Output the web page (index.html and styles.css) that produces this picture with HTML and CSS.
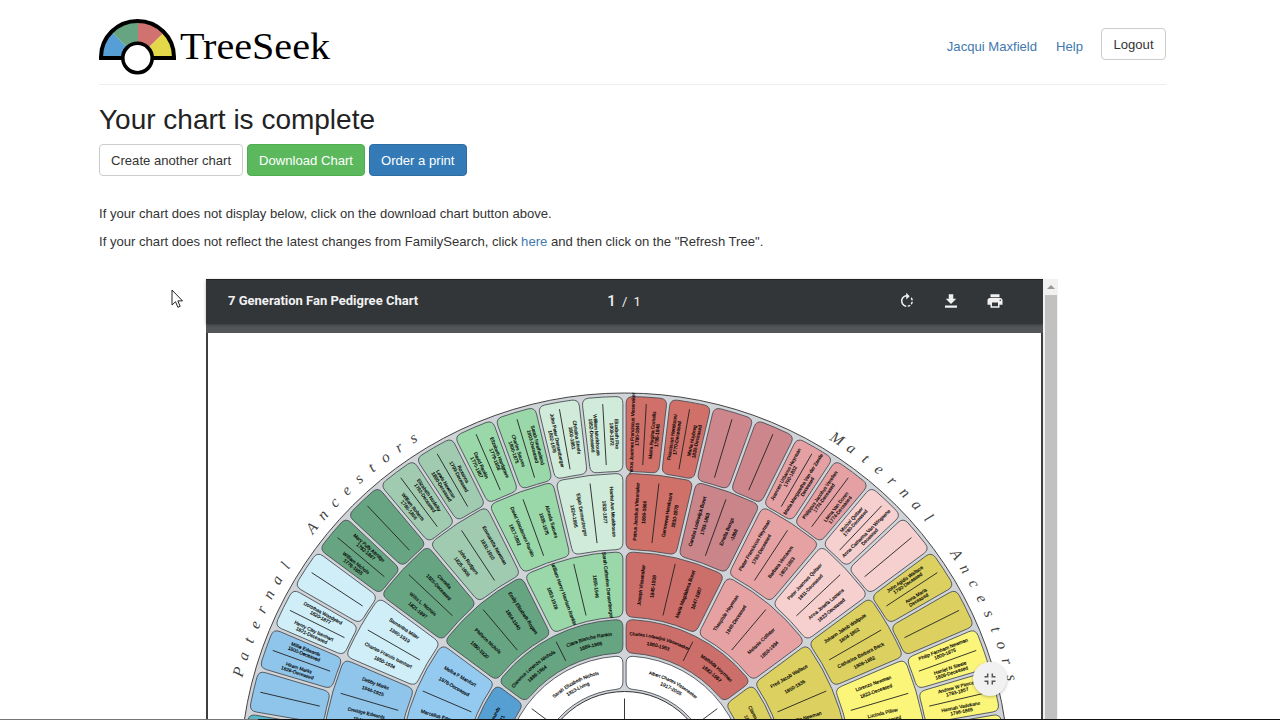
FILE: index.html
```html
<!DOCTYPE html>
<html lang="en">
<head>
    <meta charset="UTF-8">
    <meta name="viewport" content="width=device-width, initial-scale=1.0">
    <title>TreeSeek</title>
    <link rel="stylesheet" href="styles.css">
</head>
<body>
    <div class="container">
        <header class="header">
            <svg class="logo" width="240" height="60" viewBox="0 0 240 60">
                <path d="M3 39 A36 36 0 0 1 13 13.500 L39 39Z" fill="#559fd6"/>
                <path d="M13 13.500 A36 36 0 0 1 39 3 V39Z" fill="#67a481"/>
                <path d="M39 3 A36 36 0 0 1 65 13.500 L39 39Z" fill="#cf7270"/>
                <path d="M65 13.500 A36 36 0 0 1 75 39 H39Z" fill="#e3d84a"/>
                <path d="M2 39 V38 A36.500 36 0 0 1 75 38 V39Z" fill="none" stroke="#000" stroke-width="4"/>
                <circle cx="38.500" cy="39" r="14.700" fill="#fff" stroke="#000" stroke-width="3.600"/>
                <text class="logo-text" x="81" y="39.500" textLength="150" lengthAdjust="spacingAndGlyphs">TreeSeek</text>
            </svg>
            <nav class="nav">
                <a href="#">Jacqui Maxfield</a>
                <a href="#">Help</a>
                <button class="btn logout">Logout</button>
            </nav>
        </header>

        <h2>Your chart is complete</h2>
        <div class="buttons">
            <button class="btn create">Create another chart</button>
            <button class="btn btn-success">Download Chart</button>
            <button class="btn btn-primary">Order a print</button>
        </div>
        <p class="first">If your chart does not display below, click on the download chart button above.</p>
        <p>If your chart does not reflect the latest changes from FamilySearch, click <a href="#">here</a> and then click on the "Refresh Tree".</p>

        <div class="viewer">
            <div class="pdf">
                <div class="toolbar">
                    <span class="title">7 Generation Fan Pedigree Chart</span>
                    <span class="pages"><b>1</b> / 1</span>
                    <span class="tools">
                        <svg width="18" height="18" viewBox="0 0 24 24" fill="#f1f1f1"><path d="M15.550 5.550L11 1v3.070C7.060 4.560 4 7.920 4 12s3.050 7.440 7 7.930v-2.020c-2.840-.480-5-2.940-5-5.910s2.160-5.430 5-5.910V10l4.550-4.450zM19.930 11c-.170-1.390-.720-2.730-1.620-3.890l-1.420 1.420c.540.750.880 1.600 1.020 2.470h2.020zM13 17.900v2.020c1.390-.170 2.740-.710 3.900-1.610l-1.440-1.440c-.750.540-1.590.890-2.460 1.030zm3.890-2.420l1.420 1.410c.900-1.160 1.450-2.500 1.620-3.890h-2.020c-.140.870-.480 1.720-1.020 2.480z"/></svg>
                        <svg width="18" height="18" viewBox="0 0 24 24" fill="#f1f1f1"><path d="M19 9h-4V3H9v6H5l7 7 7-7zM4 18v3h16v-3z"/></svg>
                        <svg width="18" height="18" viewBox="0 0 24 24" fill="#f1f1f1"><path d="M19 8H5c-1.660 0-3 1.340-3 3v6h4v4h12v-4h4v-6c0-1.660-1.340-3-3-3zm-3 11H8v-5h8v5zm3-7c-.550 0-1-.450-1-1s.450-1 1-1 1 .450 1 1-.450 1-1 1zm-1-9H6v4h12V3z"/></svg>
                    </span>
                </div>
                <div class="page">
                    <svg id="fan" width="833" height="387" viewBox="208 333 833 387"></svg>
                </div>
            </div>
            <div class="scrollbar">
                <div class="up"></div>
                <div class="thumb"></div>
            </div>
        </div>
    </div>

    <div class="fit">
        <svg width="14" height="14" viewBox="0 0 14 14" fill="none" stroke="#555" stroke-width="1.500"><path d="M1.500 4.700h3.200V1.500M9.300 1.500v3.200h3.200M12.500 9.300H9.300v3.200M4.700 12.500V9.300H1.500"/></svg>
    </div>
    <svg class="cursor" width="13" height="20" viewBox="0 0 13 20"><path d="M1 1v15l3.500-3.300 2.400 5.600 2.300-1-2.400-5.400h4.700z" fill="#fff" stroke="#222"/></svg>
    <div class="bottom-line"></div>

    <script src="fan.js"></script>
</body>
</html>
```

FILE: styles.css
```css
body {
    margin: 0;
    height: 720px;
    overflow: hidden;
    position: relative;
    background-color: #fff;
    color: #333;
    font-family: "Liberation Sans", Arial, sans-serif;
    font-size: 13.1px;
    line-height: 18px;
}
.container {
    width: 1067px;
    margin-left: 99px;
}
.header {
    display: flex;
    justify-content: space-between;
    height: 84px;
    border-bottom: 1px solid #eee;
}
.logo {
    margin-top: 19px;
}
.logo-text {
    font-family: "Liberation Serif", serif;
    font-size: 37px;
    fill: #000;
}
.nav {
    display: flex;
    align-items: flex-start;
    padding-top: 28px;
}
.nav a {
    margin: 10px 0 0 19px;
}
.nav .logout {
    width: 65px;
    margin-left: 18px;
}
a {
    color: #4278ae;
    text-decoration: none;
}
h2 {
    margin: 18px 0 7px;
    font-size: 28px;
    font-weight: normal;
    line-height: 34px;
    color: #222;
}
.btn {
    height: 32px;
    padding: 0 11px;
    border: 1px solid #ccc;
    border-radius: 4px;
    background-color: #fff;
    color: #333;
    font-family: inherit;
    font-size: 13.1px;
    white-space: nowrap;
}
.buttons {
    display: flex;
    gap: 4px;
}
.btn-success {
    background-color: #5cb85c;
    border-color: #4cae4c;
    color: #fff;
}
.btn-primary {
    background-color: #337ab7;
    border-color: #2e6da4;
    color: #fff;
}
p {
    margin: 0 0 10px;
}
.first {
    margin-top: 29px;
}
.viewer {
    display: flex;
    width: 852px;
    height: 441px;
    margin: 28px 0 0 107px;
}
.pdf {
    width: 837px;
    background-color: #525659;
}
.toolbar {
    display: grid;
    grid-template-columns: 1fr auto 1fr;
    align-items: center;
    box-sizing: border-box;
    height: 45px;
    padding: 0 39px 2px 22px;
    border-top: 1px solid #222;
    background-color: #323639;
    box-shadow: 0 1px 3px rgba(0,0,0,.3);
    color: #f1f1f1;
    font-family: Roboto, sans-serif;
    font-size: 13px;
}
.title {
    font-weight: bold;
}
.pages {
    padding-left: 16px;
    word-spacing: 3px;
}
.pages b {
    font-size: 15px;
    font-weight: 500;
}
.tools {
    display: flex;
    justify-content: flex-end;
    gap: 26px;
}
.page {
    width: 833px;
    height: 387px;
    margin-top: 9px;
    border-left: 2px solid #3c3e42;
    border-right: 2px solid #3c3e42;
    background-color: #fff;
}
.page svg {
    display: block;
}
.scrollbar {
    width: 15px;
    padding: 0 1px;
    background-color: #f1f1f1;
}
.up {
    width: 0;
    margin: 6px auto 0;
    border: 4px solid transparent;
    border-top: 0;
    border-bottom: 4px solid #999;
}
.thumb {
    width: 12px;
    height: 426px;
    margin: 6px auto 0;
    background-color: #c1c1c1;
}
.fit {
    position: absolute;
    left: 973px;
    top: 662px;
    display: flex;
    align-items: center;
    justify-content: center;
    width: 34px;
    height: 34px;
    border-radius: 50%;
    background-color: #f1f1f1;
    box-shadow: 0 1px 3px rgba(0,0,0,.25);
}
.cursor {
    position: absolute;
    left: 171px;
    top: 289px;
}
.bottom-line {
    position: absolute;
    left: 0;
    right: 0;
    bottom: 0;
    height: 1px;
    background: linear-gradient(to right, #777 258px, #111 258px);
}

/* fan chart */
.disc {
    fill: #d0d3d8;
    stroke: #444;
    stroke-width: 1;
}
.center {
    fill: #fff;
    stroke: #333;
}
.cell {
    stroke: #4a4f55;
    stroke-width: .9;
}
.divider {
    stroke: #222;
    stroke-width: .9;
}
.person {
    font-size: 4.8px;
    fill: #000;
    stroke: #000;
    stroke-width: .15;
    text-anchor: middle;
    text-rendering: geometricPrecision;
}
.person.small {
    font-size: 4.4px;
}
.letter {
    font-family: "Liberation Serif", serif;
    font-style: italic;
    font-size: 15.5px;
    fill: #444;
    text-anchor: middle;
    text-rendering: geometricPrecision;
}
```

FILE: fan.js
```js
const CX = 624.5;
const CY = 777.5;
const STEP = 6.68; // degrees covered by one cell of the outer ring

// inner radius, outer radius, outer cells per cell, distance between name and dates
const rings = [
    { r0: 306, r1: 381, span: 1, gap: 5, inset: 7 },
    { r0: 228, r1: 304, span: 2, gap: 8, inset: 8 },
    { r0: 160.5, r1: 225.5, span: 4, gap: 12, inset: 6 },
    { r0: 124.5, r1: 158, span: 8, gap: 8, inset: 6, arc: true },
    { r0: 88.5, r1: 121.5, span: 16, gap: 7, inset: 6, arc: true }
];

// cells run from the middle outwards: color, then the couple as name, dates
const paternal = [
    [
        ['#d0ebd9', 'Elizabeth Fixe', '1809-1872', 'William Monkhouse', '1852-Deceased'],
        ['#d0ebd9', 'Christina Steele', '1800-1881', 'John Peter Densenberger', '1802-1878'],
        ['#9ad8a9', 'Sarah Neatherland', '1803-Deceased', 'Charles Sauves', '1800-1875'],
        ['#9ad8a9', 'Elizabeth Hardgrave', '1779-1856', 'David Rankin', '1770-1857'],
        ['#a0cbb0', 'Roxanna', '1799-Deceased', 'Lewis Newman', '1800-Deceased'],
        ['#a0cbb0', 'Elizabeth Nudelky', '1792-Deceased', 'William Roberts', '1785-1856'],
        ['#67a481'],
        ['#67a481', 'Mary Polly Attridge', '1782-1867', 'William Nichols', '1776-1855'],
        ['#cfeef7'],
        ['#cfeef7', 'Dorothea Woodyard', '1820-1877', 'Henry Clay Isenhart', '1821-Deceased'],
        ['#8fc5ea', 'Millie Edwards', '1800-Deceased', 'Hiram Marks', '1828-Deceased'],
        ['#8fc5ea'],
        ['#58b7c4']
    ],
    [
        ['#d0ebd9', 'Harriet Ann Monkhouse', '1832-1877', 'Elijah Densenberger', '1824-1895'],
        ['#9ad8a9', 'Almeda Sauves', '1835-1875', 'David Woodsmen Rankin', '1817-1892'],
        ['#a0cbb0', 'Emmaretta Newman', '1831-1910', 'John Rodgers', '1825-1906'],
        ['#67a481', 'Cornelia', '1825-Deceased', 'Willis L. Nichols', '1821-1897'],
        ['#cfeef7', 'Samantha Miller', '1860-1919', 'Charles Francis Isenhart', '1850-1934'],
        ['#8fc5ea', 'Debby Marks', '1846-1925', 'Orwidge Edwards', '1841-1920'],
        ['#8fc5ea']
    ],
    [
        ['#9ad8a9', 'Sarah Catherine Densenberger', '1859-1946', 'William Henry Harrison Rankin', '1853-1928'],
        ['#67a481', 'Emily Elizabeth Rogers', '1854-1940', 'Philleon Nichols', '1850-1920'],
        ['#94c9f0', 'Melba F Manifort', '1878-Deceased', 'Marcellus Edmunds', '1872-1940'],
        ['#8fc5ea']
    ],
    [
        ['#67a481', 'Clara Blanche Rankin', '1889-1965', 'Clarence Lorenzo Nichols', '1886-1964'],
        ['#559fd3', 'Mabel Edmunds', '1898-1971', '', '']
    ],
    [
        ['#fff', 'Sarah Elizabeth Nichols', '1923-Living', '', '']
    ]
];

const maternal = [
    [
        ['#d07068', 'Petrus Joannes Franciscus Vissenaker', '1780-1840', 'Maria Regina Cornelis', '1785-1848'],
        ['#d07068', 'Franciscus Hereksoni', '1770-Deceased', 'Maria Huybreg', '1830-Deceased'],
        ['#cd878c'],
        ['#cd878c'],
        ['#e4a0a2', 'Joannes Urbanus Heyrman', '1790-1832', 'Maria Margaretha Van der Zande', 'Deceased'],
        ['#e4a0a2', 'Philippus Jacobus Verellen', '1774-Deceased', 'Livina Van Doren', '1774-Deceased'],
        ['#f6cfcf', 'Michiel Quitaer', '1780-Deceased', 'Anna Catharina Van Wingaene', 'Deceased'],
        ['#f6cfcf'],
        ['#dbd060', 'John Agidis Wallace', '1790-Deceased', 'Anna Maria', 'Deceased'],
        ['#dbd060'],
        ['#fbf57a', 'Philip Farnham Newman', '1809-1875', 'Harriet N Steele', '1806-Deceased'],
        ['#fbf57a', 'Andrew W Pierce', '1783-1857', 'Hannah Vadekane', '1796-1865'],
        ['#fbf57a']
    ],
    [
        ['#cf7069', 'Petrus Jacobus Vissenaker', '1809-1866', 'Genoveva Hereksoni', '1810-1878'],
        ['#c9858a', 'Carolus Lodewijck Boret', '1793-1863', 'Emelia Boogs', '-1868'],
        ['#e6a2a3', 'Pieter Franciscus Heyrman', '1793-Deceased', 'Barbara Vercamm', '1802-1863'],
        ['#f6cfcf', 'Peter Joannes Quitaer', '1811-Deceased', 'Anna Josefa Lootens', '1823-Deceased'],
        ['#dbd060', 'Johann Jakob Wallpole', '1804-1862', 'Catharina Barbara Beck', '1808-1862'],
        ['#fbf57a', 'Lorenzo Newman', '1822-Deceased', 'Lucinda Pillow', '1824-Deceased'],
        ['#fbf57a']
    ],
    [
        ['#cc6e69', 'Joseph Vissenaker', '1845-1928', 'Maria Magdalena Boret', '1847-1907'],
        ['#e6a2a3', 'Theophile Heyrman', '1848-Deceased', 'Melanie Collister', '1850-1934'],
        ['#dbd060', 'Fred Jacob Wallace', '1850-1936', 'Ella Newman', '1857-1930'],
        ['#fbf57a']
    ],
    [
        ['#cc6e69', 'Charles Lodewijck Vissenaeker', '1880-1963', 'Mathilda Heyrman', '1882-1957'],
        ['#dbd060', 'Clarence Wallace', '1882-1950', '', '']
    ],
    [
        ['#fff', 'Albert Charles Vissenaeker', '1917-2005', '', '']
    ]
];

const fan = document.getElementById('fan');
let arcCount = 0;

function el(name, attrs, parent = fan) {
    const node = document.createElementNS('http://www.w3.org/2000/svg', name);
    for (const key in attrs) node.setAttribute(key, attrs[key]);
    parent.appendChild(node);
    return node;
}

// angle is in degrees, clockwise from the top
function point(r, angle) {
    const a = angle * Math.PI / 180;
    return (CX + r * Math.sin(a)).toFixed(2) + ' ' + (CY - r * Math.cos(a)).toFixed(2);
}

function cellPath(r0, r1, a0, a1) {
    const deg = (px, r) => px / r * 180 / Math.PI;
    const c = 7;
    const i0 = a0 + deg(1.6, r0), i1 = a1 - deg(1.6, r0);
    const o0 = a0 + deg(1.6, r1), o1 = a1 - deg(1.6, r1);
    const m0 = a0 + deg(1.6, r1 - c), m1 = a1 - deg(1.6, r1 - c);
    const n0 = a0 + deg(1.6, r0 + c), n1 = a1 - deg(1.6, r0 + c);
    return `M${point(r1 - c, m0)} Q${point(r1, o0)} ${point(r1, o0 + deg(c, r1))}` +
        ` A${r1} ${r1} 0 0 1 ${point(r1, o1 - deg(c, r1))} Q${point(r1, o1)} ${point(r1 - c, m1)}` +
        ` L${point(r0 + c, n1)} Q${point(r0, i1)} ${point(r0, i1 - deg(c, r0))}` +
        ` A${r0} ${r0} 0 0 0 ${point(r0, i0 + deg(c, r0))} Q${point(r0, i0)} ${point(r0 + c, n0)} Z`;
}

function drawLine(r0, r1, angle) {
    el('path', { class: 'divider', d: `M${point(r0, angle)} L${point(r1, angle)}` });
}

function radialText(text, r, angle, side, dy) {
    const [x, y] = point(r, angle).split(' ');
    const rot = side < 0 ? angle + 90 : angle - 90;
    el('text', { class: 'person', y: dy + 1.8, transform: `translate(${x} ${y}) rotate(${rot})` }).textContent = text;
}

function arcText(text, r, angle) {
    const id = 'arc' + arcCount++;
    el('path', { id, fill: 'none', d: `M${point(r, angle - 40)} A${r} ${r} 0 0 1 ${point(r, angle + 40)}` });
    const t = el('text', { class: text.length > 25 ? 'person small' : 'person' });
    el('textPath', { href: '#' + id, startOffset: '50%' }, t).textContent = text;
}

function drawSide(data, side) {
    data.forEach((cells, n) => {
        const ring = rings[n];
        const width = ring.span * STEP;
        const mid = (ring.r0 + ring.r1) / 2;
        cells.forEach((cell, i) => {
            const near = side * i * width;
            const far = side * (i + 1) * width;
            el('path', {
                class: 'cell',
                fill: cell[0],
                d: cellPath(ring.r0, ring.r1, Math.min(near, far), Math.max(near, far))
            });
            drawLine(ring.r0 + ring.inset, ring.r1 - ring.inset, (near + far) / 2);
            for (let p = 0; p < 2; p++) {
                const name = cell[1 + p * 2];
                if (!name) continue;
                const angle = near + side * width * (p ? .75 : .25);
                if (ring.arc) {
                    // keep the names clear of the middle gap
                    const shift = p ? 0 : side;
                    arcText(name, mid + 1, angle + shift);
                    arcText(cell[2 + p * 2], mid + 1 - ring.gap, angle + shift);
                } else {
                    radialText(name, mid, angle, side, -ring.gap / 2);
                    radialText(cell[2 + p * 2], mid, angle, side, ring.gap / 2);
                }
            }
        });
    });
}

function drawWord(word, start, end) {
    [...word].forEach((ch, i) => {
        const angle = start + (end - start) * i / (word.length - 1);
        const [x, y] = point(395, angle).split(' ');
        el('text', { class: 'letter', transform: `translate(${x} ${y}) rotate(${angle})` }).textContent = ch;
    });
}

el('circle', { class: 'disc', cx: CX, cy: CY, r: 384.5 });
drawSide(paternal, -1);
drawSide(maternal, 1);
el('circle', { class: 'center', cx: CX, cy: CY, r: 86 });
drawLine(40, 79, 0);

drawWord('Paternal', -74.7, -58);
drawWord('Ancestors', -51.4, -31.9);
drawWord('Maternal', 32.1, 49.5);
drawWord('Ancestors', 56.1, 75.5);
```
